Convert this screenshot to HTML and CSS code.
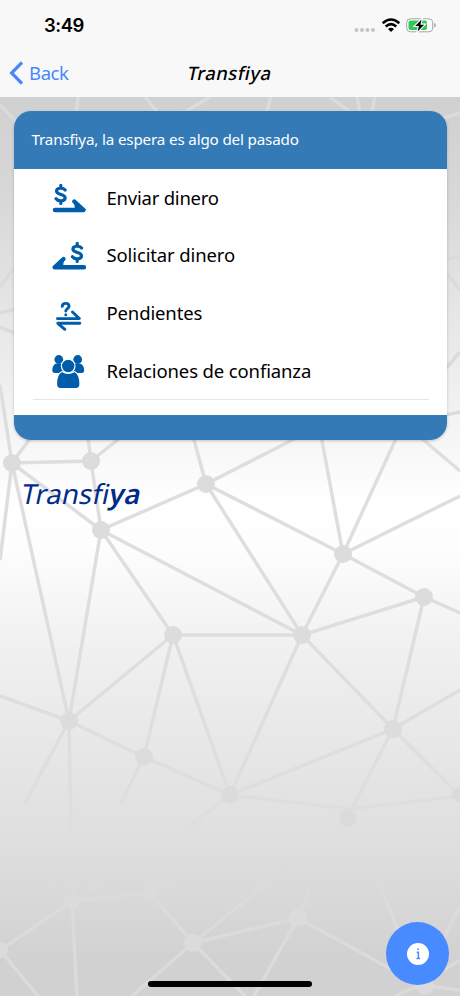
FILE: index.html
```
<!DOCTYPE html>
<html lang="es">
<head>
<meta charset="utf-8">
<title>Transfiya</title>
<link rel="stylesheet" href="styles.css">
</head>
<body>
<div class="screen">
  <svg class="network" viewBox="0 0 460 996" aria-hidden="true">
    <g class="edges">
      <path d="M0 385L12 463L91 461L101 530L12 463L69 721L101 530L206 484L190 425M12 463L0 560M12 463L40 425M91 461L87 430M91 461L130 430M206 484L300 436M206 484L343 554L302 635L206 484M101 530L173 635L302 635L101 530M343 554L320 430M343 554L400 430M343 554L460 496M343 554L424 597L302 635L393 729L424 597L460 613M420 437L460 471M173 635L69 721L144 757L173 635L230 795L144 757L120 805M0 696L69 721L24 805M69 721L71 830M302 635L230 795L393 729L460 690M393 729L460 796L350 809L230 795M393 729L350 812M230 795L190 826"/>
      <path class="faint" d="M0 950L72 901L150 893L193 943L298 918L420 985L460 960M72 901L77 996M0 950L38 996M193 943L132 996M193 943L245 996M193 943L290 865M298 918L254 996M298 918L312 885M380 885L420 985L460 906M420 985L395 996M420 985L460 990M72 901L72 860M72 901L50 882M72 901L105 880M150 893L175 880"/>
      <path class="faint" d="M0 105L40 145M78 97L75 125M145 97L160 115M210 97L180 115M271 97L264 120M330 97L360 120M357 97L361 120M375 97L370 120M435 121L460 113M0 287L20 260M0 313L20 308M0 327L20 335M440 265L460 290M440 262L460 256M440 375L460 352M440 416L460 412"/>
    </g>
    <g class="nodes">
      <circle cx="12" cy="463" r="9"/><circle cx="91" cy="461" r="9"/><circle cx="206" cy="484" r="9"/><circle cx="101" cy="530" r="9"/><circle cx="343" cy="554" r="9"/><circle cx="424" cy="597" r="9"/><circle cx="302" cy="635" r="9"/><circle cx="173" cy="635" r="9"/><circle cx="69" cy="721" r="9"/><circle cx="144" cy="757" r="9"/><circle cx="393" cy="729" r="9"/>
    </g>
    <g class="nodes-faint">
      <circle cx="230" cy="795" r="9"/><circle cx="348" cy="818" r="9"/><circle cx="460" cy="795" r="8"/><circle cx="0" cy="950" r="8"/><circle cx="72" cy="901" r="8"/><circle cx="150" cy="893" r="8"/><circle cx="193" cy="943" r="9"/><circle cx="298" cy="918" r="9"/><circle cx="425" cy="986" r="9"/>
    </g>
  </svg>

  <header class="topbar">
    <div class="status">
      <span class="clock">3:49</span>
      <svg class="status-icons" viewBox="0 0 84 20" width="84" height="20" aria-hidden="true">
        <g fill="#c4c4c6"><circle cx="3.5" cy="13" r="2"/><circle cx="9" cy="13" r="2"/><circle cx="14.5" cy="13" r="2"/><circle cx="20" cy="13" r="2"/></g>
        <g fill="none" stroke="#000" stroke-width="2.5"><path d="M29.7 6.3Q38 -1.2 46.3 6.3"/><path d="M32.7 9.5Q38 4.7 43.3 9.5"/></g>
        <path d="M35 12Q38 9.6 41 12L38 15Z"/>
        <rect x="53.7" y="1.8" width="26" height="13" rx="3.8" fill="#fff" stroke="#a3a3a8"/>
        <rect x="55.5" y="3.5" width="18.5" height="9.6" rx="2" fill="#35c759"/>
        <path d="M81.2 6v4.6q1.6-.6 1.6-2.3t-1.6-2.3" fill="#a3a3a8"/>
        <path d="M68.6 2.5L62.2 9h3.7l-1.3 5.5 6.6-6.8h-3.8z" stroke="#fff" stroke-width="2.2" paint-order="stroke"/>
      </svg>
    </div>
    <nav class="nav">
      <a class="back"><svg viewBox="0 0 14 24" width="14" height="24" aria-hidden="true"><path d="M13 1.5L2.6 12L13 22.5" fill="none" stroke="#4788ff" stroke-width="3.2"/></svg><span>Back</span></a>
      <h1 class="title">Transfiya</h1>
    </nav>
  </header>

  <main class="content">
    <section class="card">
      <h2 class="card-head">Transfiya, la espera es algo del pasado</h2>
      <ul class="menu">
        <li><svg class="icon" viewBox="0 0 36 36" aria-hidden="true"><g class="stroke"><path class="dollar" d="M14.2 10.1C12 7.4 5.5 7.6 5.5 11.1C5.5 15.5 14.1 13.5 14.1 17.7C14.1 21.5 7.3 21.8 5 18.7M9.8 5.3V7.8M9.8 20.8V23.5"/><path class="arrow" d="M4 30H32.5L23.3 21.500"/></g><path d="M23 21l12.500 9H24z"/></svg><span class="label label-tight">Enviar dinero</span></li>
        <li><svg class="icon" viewBox="0 0 36 36" aria-hidden="true"><g class="stroke"><path class="dollar" d="M30.6 10.1C28.4 7.4 21.9 7.6 21.9 11.1C21.9 15.5 30.5 13.5 30.5 17.7C30.5 21.5 23.7 21.8 21.4 18.7M26.2 5.3V7.8M26.2 20.8V23.5"/><path class="arrow" d="M33 29.300H3.700L12.500 21"/></g><path d="M13 20.500L1 29.300h11z"/></svg><span class="label">Solicitar dinero</span></li>
        <li><svg class="icon" viewBox="0 0 36 36" aria-hidden="true"><g class="stroke"><path class="thin" d="M11.2 11.3C11.5 7.3 18 7.5 18 11.2C18 13.7 14.8 13.5 14.8 16M21.500 17L28.300 23.6H6.4M28.8 28.300H6.8L13.800 34.300"/></g><circle cx="14.8" cy="19.700" r="1.500"/></svg><span class="label">Pendientes</span></li>
        <li><svg class="icon" viewBox="0 0 36 36" aria-hidden="true"><circle cx="7.8" cy="6.5" r="4.4"/><circle cx="26.7" cy="6.5" r="4.4"/><path d="M5 10.4h5.5l3 9.5H4Q1.3 19.9 1.3 17.2Q1.3 12.2 5 10.4M29 10.4h-5.5l-3 9.5H30.5Q33.2 19.9 33.2 17.2Q33.2 12.2 29 10.4"/><g class="front"><path d="M11 18.500Q17.200 22.500 23.400 18.500Q29 21 29 31Q29 35.500 25 35.500H9.500Q5.500 35.500 5.500 31Q5.500 21 11 18.500"/><circle cx="17.200" cy="13" r="6.800"/></g></svg><span class="label">Relaciones de confianza</span></li>
      </ul>
      <div class="card-foot"></div>
    </section>
    <p class="brand">Transfi<b>ya</b></p>
  </main>

  <button class="fab" aria-label="Información"><svg viewBox="0 0 22 22" width="22" height="22" aria-hidden="true"><circle cx="11" cy="11" r="11" fill="#fff"/><path d="M9.7 9.2h1.7v6.2M9.4 15.6h3.6M10.2 6.3h1.6" fill="none" stroke="#488aff" stroke-width="1.5"/></svg></button>
  <div class="home-bar"></div>
</div>
</body>
</html>
```
FILE: styles.css
```
* { box-sizing: border-box; }
body { margin: 0; font-family: "Noto Sans", sans-serif; color: #000; }
.screen {
  position: relative;
  width: 460px;
  height: 996px;
  overflow: hidden;
  background: linear-gradient(#d0d0d0 97px, #d8d8d8 200px, #f2f2f2 410px, #fff 505px, #fdfdfd 550px, #f0f0f0 650px, #e3e3e3 790px, #dedede 850px, #d1d1d1 960px, #d1d1d1);
}
.network { position: absolute; inset: 0; width: 100%; height: 100%; }
.edges { fill: none; stroke: #dedede; stroke-width: 3.5; }
.edges .faint { stroke: #dbdbdb; }
.nodes { fill: #dcdcdc; }
.nodes-faint { fill: #dbdbdb; }
.topbar { position: relative; height: 97px; background: #f8f8f8; }
.status { display: flex; justify-content: space-between; height: 49px; padding: 15px 23px 0 44px; }
.clock { font: 600 18.5px/21px Inter, sans-serif; letter-spacing: -.5px; }
.status-icons { display: block; margin-top: 2px; }
.nav { display: grid; grid-template-columns: 1fr auto 1fr; align-items: center; height: 48px; padding: 0 9px; }
.back { display: flex; align-items: center; gap: 6px; color: #4788ff; font-size: 18.5px; letter-spacing: -.4px; }
.back span { margin-top: -2px; }
.title { margin: 0 0 2px; font-size: 18.5px; font-weight: 500; letter-spacing: .45px; transform: skewX(-12deg); }
.content { position: relative; padding: 14px 13.5px 0; }
.card { width: 433px; height: 329px; display: flex; flex-direction: column; overflow: hidden; border-radius: 17px; background: #fff; box-shadow: 0 1px 3px rgba(0,0,0,.22); }
.card-head { height: 58px; margin: 0; padding-left: 18px; background: #337ab7; color: #fff; font-size: 15.2px; font-weight: 400; line-height: 57px; letter-spacing: -.16px; }
.menu { list-style: none; height: 231px; margin: 0 18px 0 19px; padding: 0; border-bottom: 1px solid #e6e6e6; }
.menu li { display: flex; align-items: center; height: 57.7px; padding-left: 18px; font-size: 18.5px; }
.label { margin-top: -1.6px; letter-spacing: -.13px; }
.label-tight { letter-spacing: -.22px; }
.icon { width: 36px; height: 36px; margin-right: 20px; fill: #005dab; }
.stroke { fill: none; stroke: #005dab; stroke-linecap: round; stroke-linejoin: round; }
.dollar { stroke-width: 3.2; }
.arrow { stroke-width: 4.4; }
.thin { stroke-width: 2.9; }
.front { stroke: #fff; stroke-width: 1.2; }
.card-foot { height: 25px; margin-top: auto; background: #337ab7; }
.brand { width: max-content; margin: 34px 0 0 8px; color: #002b88; font-size: 27.5px; line-height: 40px; letter-spacing: .15px; transform: skewX(-12deg); }
.brand b { font-weight: 600; }
.fab { position: absolute; left: 386px; top: 922px; display: grid; place-items: center; width: 63px; height: 63px; padding: 0; border: 0; border-radius: 50%; background: #488aff; }
.home-bar { position: absolute; left: 148px; bottom: 9px; width: 164px; height: 6px; border-radius: 3px; background: #000; }
```
